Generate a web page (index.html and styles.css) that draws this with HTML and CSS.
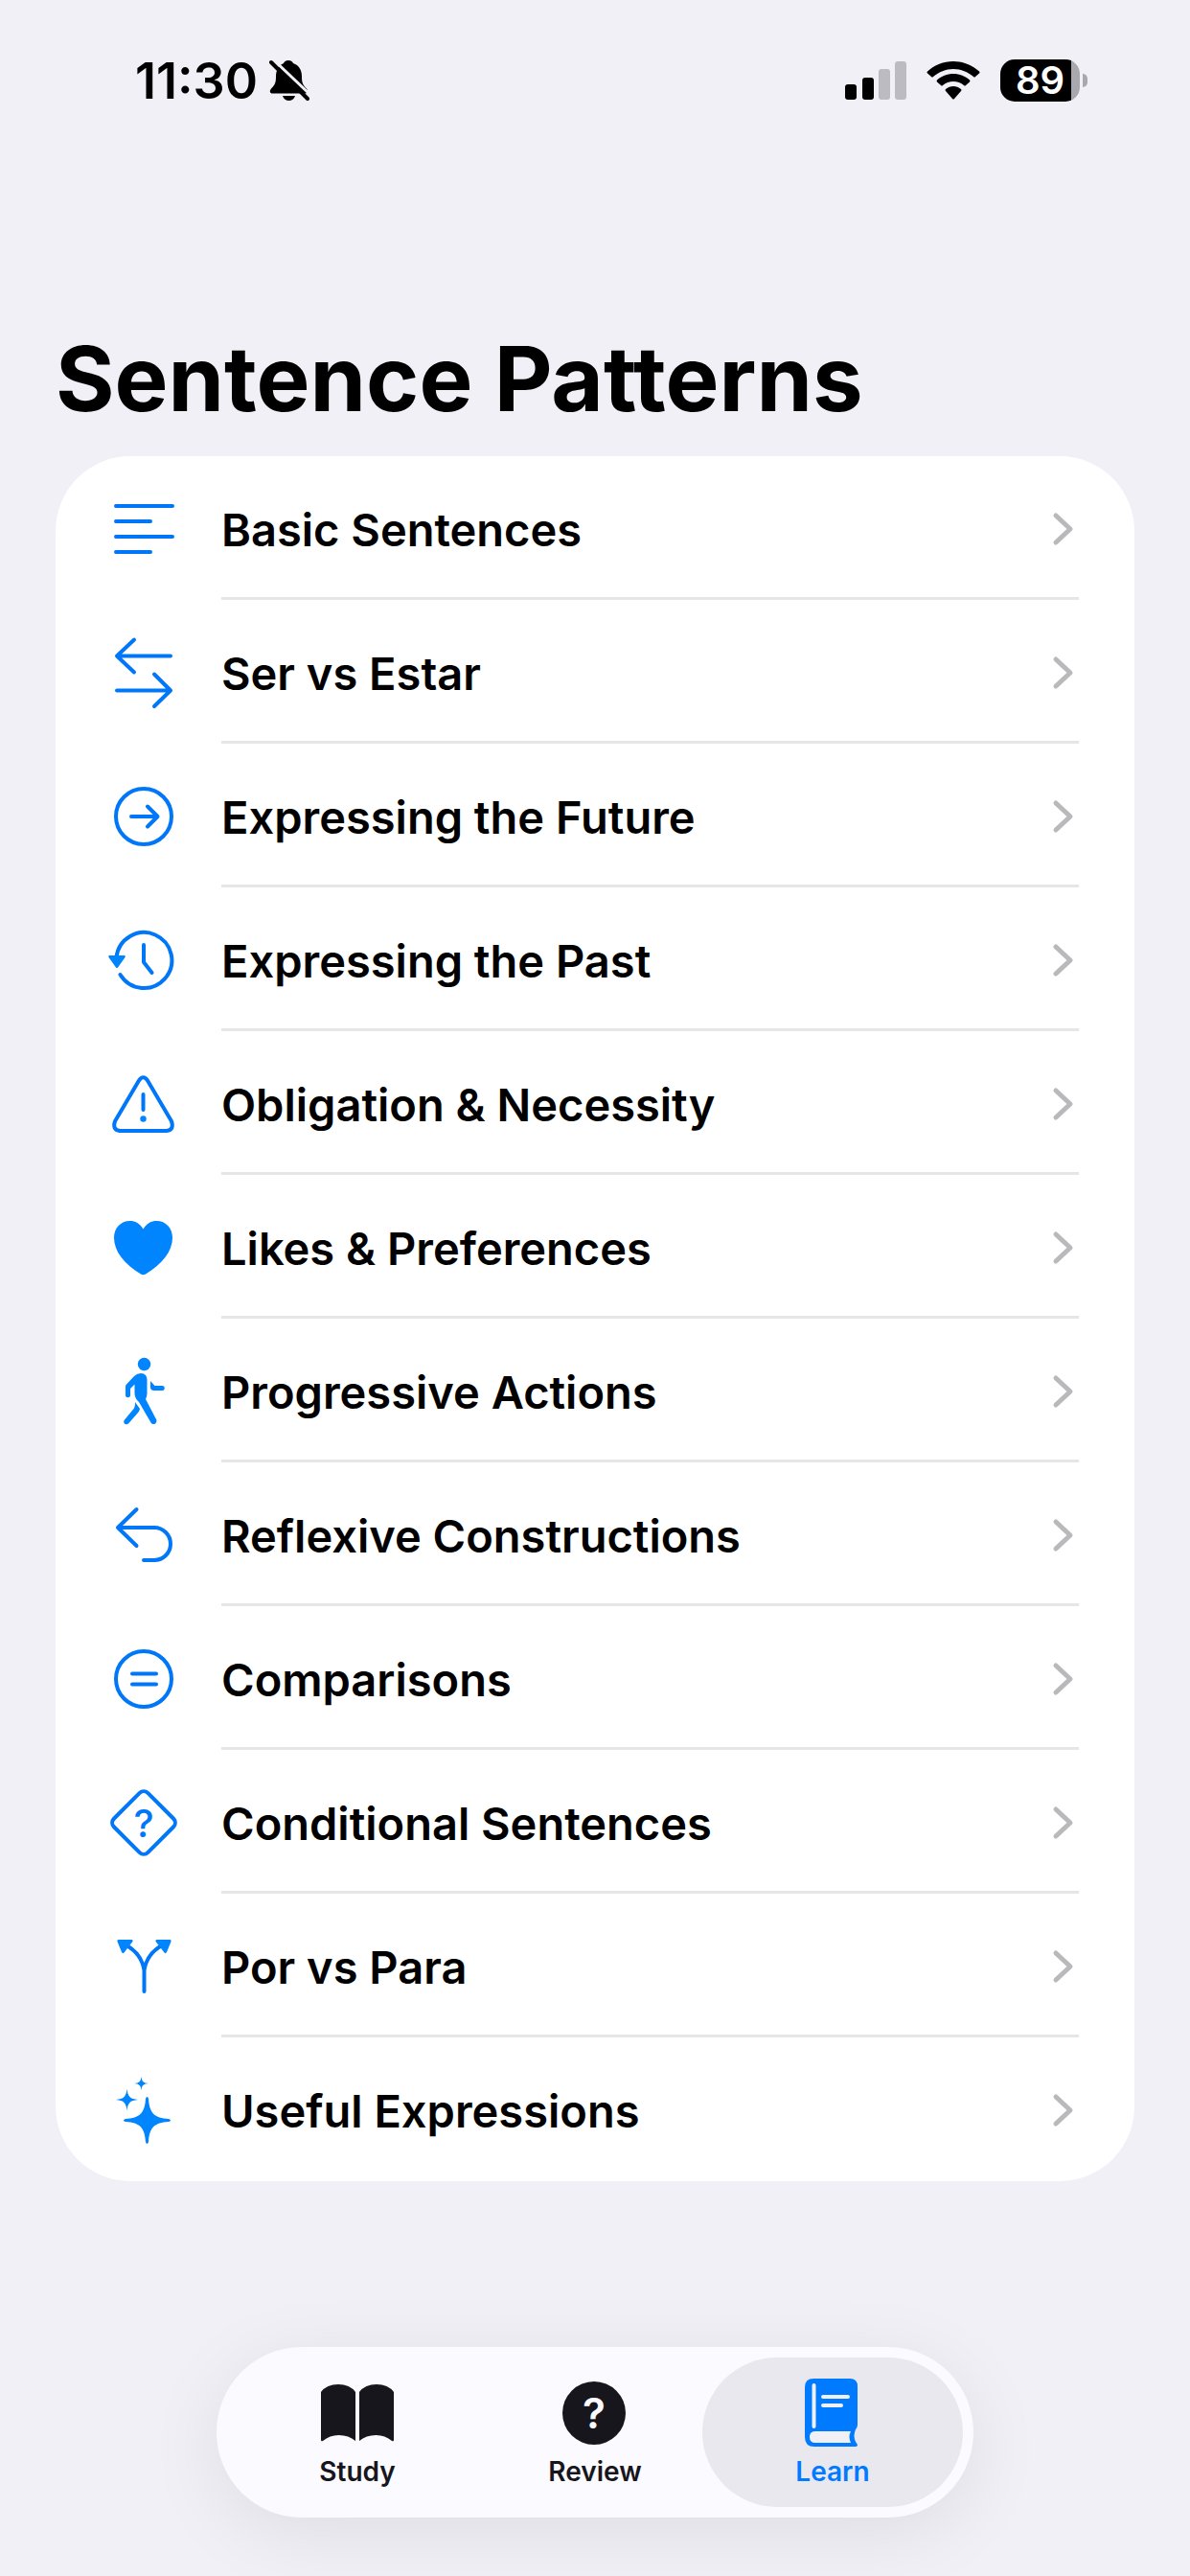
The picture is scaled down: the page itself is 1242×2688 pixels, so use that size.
FILE: index.html
```html
<!DOCTYPE html>
<html lang="en">
<head>
    <meta charset="UTF-8">
    <meta name="viewport" content="width=device-width, initial-scale=1.0">
    <title>Sentence Patterns</title>
    <link rel="stylesheet" href="styles.css">
</head>
<body>
    <svg class="symbols" width="0" height="0">
        <symbol id="chevron" viewBox="0 0 24 36"><path d="M4 4L19 18L4 32"/></symbol>
    </svg>

    <header class="status-bar">
        <div class="status-left">
            <span class="time">11:30</span>
            <svg class="bell" width="42" height="46" viewBox="0 0 42 46">
                <path d="M20 2C23 2 24.500 3.500 25 5C31 7 34 12 34 19C34 26 35.500 28 39 31.500C41 34 40 36.500 37 36.500H3.500C0.500 36.500 0 34 2 31.500C5.500 28 7 26 7 19C7 12 10 7 15 5C15.500 3.500 17 2 20 2Z"/>
                <path d="M14 39H27C26 42.500 23.500 44 20.500 44C17.500 44 15 42.500 14 39Z"/>
                <path class="bell-gap" d="M4 1L42 37"/>
                <path class="bell-slash" d="M2 4L40 42"/>
            </svg>
        </div>
        <div class="status-right">
            <svg width="64" height="42" viewBox="0 0 64 42">
                <rect x="0" y="25" width="12" height="16" rx="3"/>
                <rect x="18" y="18" width="12" height="23" rx="3"/>
                <rect class="dim" x="35" y="9" width="12" height="32" rx="3"/>
                <rect class="dim" x="52" y="1" width="12" height="40" rx="3"/>
            </svg>
            <svg width="56" height="42" viewBox="0 0 56 42">
                <path d="M28 1C38 1 48 5 55 11.500Q56 12.500 55 13.500L51 17Q50 18 49 17C43 12 36 9 28 9C20 9 13 12 7 17Q6 18 5 17L1 13.500Q0 12.500 1 11.500C8 5 18 1 28 1Z"/>
                <path d="M28 14C34.500 14 40.500 16.500 45 20.500Q46 21.500 45 22.500L41 26Q40 27 39 26C36 23.500 32 22 28 22C24 22 20 23.500 17 26Q16 27 15 26L11 22.500Q10 21.500 11 20.500C15.500 16.500 21.500 14 28 14Z"/>
                <path d="M28 27C31 27 33.500 28 36 30Q37 31 36 32L29 40Q28 41 27 40L20 32Q19 31 20 30C22.500 28 25 27 28 27Z"/>
            </svg>
            <div class="battery"><span class="battery-level">89</span></div>
        </div>
    </header>

    <main>
        <h1>Sentence Patterns</h1>
        <ul class="card">
            <li>
                <a class="row" href="#basic">
                    <svg class="icon" viewBox="0 0 84 84"><path d="M14 19H73M14 35H50M14 51H73M14 67H50"/></svg>
                    <span class="label">Basic Sentences<svg class="chevron"><use href="#chevron"/></svg></span>
                </a>
            </li>
            <li>
                <a class="row" href="#ser-estar">
                    <svg class="icon" viewBox="0 0 84 84"><path d="M71 25.500H15M33 8.500L15 25.500L33 42.500M15 61.500H71M54 44.500L71 61.500L54 78"/></svg>
                    <span class="label">Ser vs Estar<svg class="chevron"><use href="#chevron"/></svg></span>
                </a>
            </li>
            <li>
                <a class="row" href="#future">
                    <svg class="icon" viewBox="0 0 84 84"><circle cx="43" cy="43" r="29"/><path d="M30 43H57M47 32.500L57.500 43L47 53.500"/></svg>
                    <span class="label">Expressing the Future<svg class="chevron"><use href="#chevron"/></svg></span>
                </a>
            </li>
            <li>
                <a class="row" href="#past">
                    <svg class="icon" viewBox="0 0 84 84"><path d="M14.500 40A29 29 0 1 1 18.500 58M43 27V45L51.500 56"/><path class="solid" d="M7 38H23Q24.500 38.500 23.500 40L16 50.500Q15 51.500 14 50.500L6.500 40Q5.500 38.500 7 38Z"/></svg>
                    <span class="label">Expressing the Past<svg class="chevron"><use href="#chevron"/></svg></span>
                </a>
            </li>
            <li>
                <a class="row" href="#obligation">
                    <svg class="icon" viewBox="0 0 84 84"><path d="M38 18.500Q42.500 12 47 18.500L72 61Q75 70 67 71H18Q10 70 13 61ZM42.500 33V49"/><circle class="solid" cx="42.500" cy="58.500" r="3.200"/></svg>
                    <span class="label">Obligation &amp; Necessity<svg class="chevron"><use href="#chevron"/></svg></span>
                </a>
            </li>
            <li>
                <a class="row" href="#likes">
                    <svg class="icon" viewBox="0 0 84 84"><path class="solid" d="M42.500 23.500C46 17.500 51 15 56.500 15C66 15 73 22.500 73 32.500C73 47 62 60 45 70.500Q42.500 72 40 70.500C23 60 12 47 12 32.500C12 22.500 19 15 28.500 15C34 15 39 17.500 42.500 23.500Z"/></svg>
                    <span class="label">Likes &amp; Preferences<svg class="chevron"><use href="#chevron"/></svg></span>
                </a>
            </li>
            <li>
                <a class="row" href="#progressive">
                    <svg class="icon" viewBox="0 0 84 84">
                        <circle class="solid" cx="43.500" cy="14.500" r="6.700"/>
                        <path class="solid" d="M40 24C44.500 24 46.500 27 46.500 31V45Q46.500 48 45 51L56 72C58 76 53 79 50.500 75.500L38 54Q33.500 50 33.500 45V35.500L29 40V47C29 50 24 50 24 47V38Q24 36.500 25 35.500L33 27Q36 24 40 24Z"/>
                        <path class="solid" d="M34 54L39 61Q38.500 63 37.500 64.500L27.500 76C24.500 79 20.500 76 23 72.500L33 60.500Q34.500 57 34 54Z"/>
                        <path class="solid" d="M50 32L54.500 37H62.500C65.500 37 65.500 42 62.500 42H53Q50.500 41.500 50 39.500Z"/>
                    </svg>
                    <span class="label">Progressive Actions<svg class="chevron"><use href="#chevron"/></svg></span>
                </a>
            </li>
            <li>
                <a class="row" href="#reflexive">
                    <svg class="icon" viewBox="0 0 84 84"><path d="M35.500 16L16 35L35.500 54M16 35H54A17 17 0 0 1 54 69H43"/></svg>
                    <span class="label">Reflexive Constructions<svg class="chevron"><use href="#chevron"/></svg></span>
                </a>
            </li>
            <li>
                <a class="row" href="#comparisons">
                    <svg class="icon" viewBox="0 0 84 84"><circle cx="43" cy="43" r="29"/><path d="M31 37.500H56M31 48.500H56"/></svg>
                    <span class="label">Comparisons<svg class="chevron"><use href="#chevron"/></svg></span>
                </a>
            </li>
            <li>
                <a class="row" href="#conditional">
                    <svg class="icon" viewBox="0 0 84 84"><rect x="18" y="18" width="50" height="50" rx="6" transform="rotate(45 43 43)"/><text class="mark" x="43" y="58">?</text></svg>
                    <span class="label">Conditional Sentences<svg class="chevron"><use href="#chevron"/></svg></span>
                </a>
            </li>
            <li>
                <a class="row" href="#por-para">
                    <svg class="icon" viewBox="0 0 84 84"><path d="M43.500 69V47Q41 30 25 21M43.500 47Q46 30 62 21"/><path class="solid" d="M17 15H30.500Q32.500 15.500 31 17.500L22.500 28.500Q21 30 20 28L15.500 17Q15 15 17 15ZM70 15H56.500Q54.500 15.500 56 17.500L64.500 28.500Q66 30 67 28L71.500 17Q72 15 70 15Z"/></svg>
                    <span class="label">Por vs Para<svg class="chevron"><use href="#chevron"/></svg></span>
                </a>
            </li>
            <li>
                <a class="row" href="#useful">
                    <svg class="icon" viewBox="0 0 84 84"><path class="solid" d="M46.500 29Q47.500 29 48 31C49 46 54 51 69 52Q71 52.500 71 53.500Q71 54.500 69 55C54 56 49 61 48 76Q47.500 78 46.500 78Q45.500 78 45 76C44 61 39 56 24 55Q22 54.500 22 53.500Q22 52.500 24 52C39 51 44 46 45 31Q45.500 29 46.500 29Z"/><path class="solid" d="M25.500 20.500C26.500 29 28.500 31 37 32C28.500 33 26.500 35 25.500 43.500C24.500 35 22.500 33 14 32C22.500 31 24.500 29 25.500 20.500ZM40.500 7.500C41 13 42.500 14.500 48 15C42.500 15.500 41 17 40.500 22.500C40 17 38.500 15.500 33 15C38.500 14.500 40 13 40.500 7.500Z"/></svg>
                    <span class="label">Useful Expressions<svg class="chevron"><use href="#chevron"/></svg></span>
                </a>
            </li>
        </ul>
    </main>

    <nav class="tab-bar">
        <a class="tab" href="#study">
            <svg width="80" height="72" viewBox="0 0 80 72"><path d="M2 14Q8 6 20 6Q32 6 38 14V65Q31 59 20.500 59Q11 59 4 65Q2 66 2 64ZM42 14Q48 6 60 6Q72 6 78 14V64Q78 66 76 65Q69 59 59.500 59Q49 59 42 65Z"/></svg>
            <span>Study</span>
        </a>
        <a class="tab" href="#review">
            <svg width="80" height="72" viewBox="0 0 80 72"><circle cx="39" cy="36" r="33"/><text class="tab-mark" x="39" y="52">?</text></svg>
            <span>Review</span>
        </a>
        <a class="tab active" href="#learn">
            <svg width="80" height="72" viewBox="0 0 80 72">
                <path d="M20 0H58Q66 0 66 8V48Q66 51 64 53Q61 60 64 66L66 69Q66 71 64 71H21Q11 71 11 61V9Q11 0 20 0Z"/>
                <path class="cutout" d="M22 55H59Q56 61 59 67H22Q16 67 16 61Q16 55 22 55Z"/>
                <path class="cutout-line" d="M20.500 7V50M30 19H56M30 28H49"/>
            </svg>
            <span>Learn</span>
        </a>
    </nav>
</body>
</html>
```

FILE: styles.css
```css
* {
    box-sizing: border-box;
}
body {
    background-color: #f1f0f6;
    color: #000;
    font-family: Inter, 'Liberation Sans', sans-serif;
    display: flex;
    flex-direction: column;
    min-height: 100vh;
    margin: 0;
}
a {
    color: inherit;
    text-decoration: none;
}
.symbols {
    position: absolute;
}

/* status bar */
.status-bar {
    display: flex;
    justify-content: space-between;
    align-items: center;
    height: 168px;
    padding: 0 107px 0 141px;
}
.status-left {
    display: flex;
    align-items: center;
    gap: 12px;
}
.time {
    font-size: 52px;
    font-weight: 600;
}
.status-right {
    display: flex;
    align-items: center;
    gap: 21px;
}
.dim {
    fill: #bcbbc1;
}
.bell-gap, .bell-slash {
    fill: none;
    stroke: #f1f0f6;
    stroke-width: 3px;
}
.bell-slash {
    stroke: #000;
    stroke-width: 4px;
    stroke-linecap: round;
}
.battery {
    position: relative;
    width: 83px;
    height: 44px;
    margin-right: 8px;
    border-radius: 15px;
    background: linear-gradient(to right, #000 74px, #a9a8ad 74px);
    color: #fff;
    font-size: 40px;
    font-weight: 600;
    line-height: 44px;
    text-align: center;
}
.battery::after {
    content: "";
    position: absolute;
    top: 15px;
    right: -8px;
    width: 5px;
    height: 14px;
    border-radius: 0 7px 7px 0;
    background: #a9a8ad;
}

/* list */
main {
    padding: 0 58px;
}
h1 {
    margin: 167px 0 21px;
    font-size: 94px;
    font-weight: 700;
    line-height: 120px;
}
.card {
    margin: 0;
    padding: 0 58px 0 49px;
    list-style: none;
    background: #fff;
    border-radius: 78px;
}
.row {
    display: flex;
    align-items: center;
    gap: 40px;
    height: 150px;
}
.icon {
    flex: none;
    width: 84px;
    height: 84px;
    fill: none;
    stroke: #0077f8;
    stroke-width: 4px;
    stroke-linecap: round;
    stroke-linejoin: round;
}
.solid {
    fill: #0085ff;
    stroke: none;
}
.mark {
    fill: #0077f8;
    stroke: none;
    font-size: 40px;
    font-weight: 500;
    text-anchor: middle;
}
.label {
    display: flex;
    flex: 1;
    justify-content: space-between;
    align-items: center;
    height: 150px;
    padding: 5px 4px 0 0;
    border-bottom: 3px solid #e6e6e9;
    font-size: 47px;
    font-weight: 600;
}
.chevron {
    width: 24px;
    height: 36px;
    fill: none;
    stroke: #b9b9bb;
    stroke-width: 5px;
    stroke-linecap: round;
    stroke-linejoin: round;
}
li:last-child .label {
    border-bottom-color: transparent;
}

/* tab bar */
.tab-bar {
    display: flex;
    align-self: center;
    margin: auto 0 61px;
    padding: 11px;
    border-radius: 89px;
    background: #fbfaff;
    box-shadow: 0 16px 80px rgba(0, 0, 0, 0.08);
}
.tab {
    display: flex;
    flex-direction: column;
    align-items: center;
    width: 272px;
    height: 156px;
    padding-top: 22px;
    border-radius: 78px;
    color: #17161c;
    fill: currentColor;
    font-size: 28px;
    font-weight: 600;
    line-height: 32px;
}
.tab + .tab {
    margin-left: -24px;
}
.tab span {
    margin-top: 9px;
}
.active {
    background: #e9e8ee;
    color: #007aff;
}
.tab-mark {
    fill: #fbfaff;
    font-size: 44px;
    text-anchor: middle;
}
.cutout {
    fill: #f1f0f6;
}
.cutout-line {
    fill: none;
    stroke: #f1f0f6;
    stroke-width: 4px;
    stroke-linecap: round;
}
```
